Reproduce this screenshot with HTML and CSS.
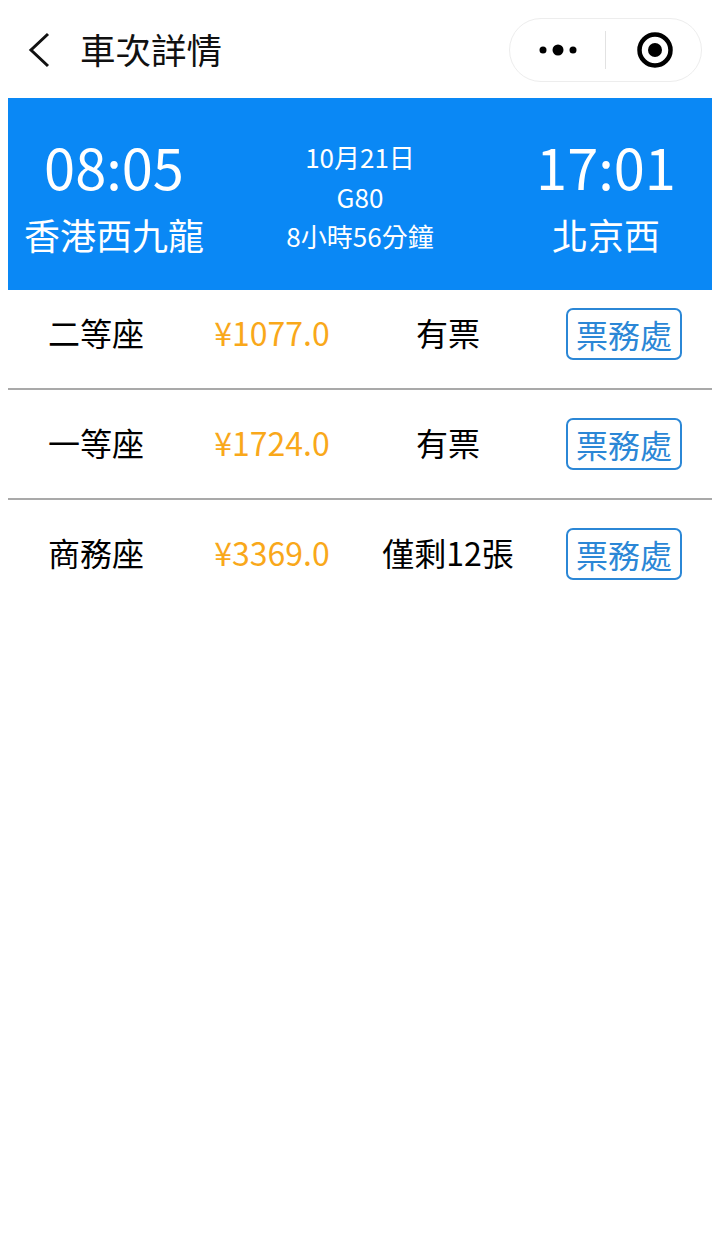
FILE: index.html
```html
<!DOCTYPE html>
<html lang="zh-Hant">
<head>
  <meta charset="UTF-8" />
  <title>車次詳情</title>
  <link rel="stylesheet" href="styles.css">
</head>
<body>

<header class="navbar">
  <div class="nav-left">
    <svg class="back-icon" width="22" height="36" viewBox="0 0 22 36">
      <path d="M20 2 L3 18 L20 34" fill="none" stroke="#111" stroke-width="3" />
    </svg>
    <span class="nav-title">車次詳情</span>
  </div>
  <div class="capsule">
    <svg class="capsule-more" width="40" height="14" viewBox="0 0 40 14">
      <circle cx="5" cy="7" r="3.5" fill="#000" />
      <circle cx="20" cy="7" r="5.5" fill="#000" />
      <circle cx="35" cy="7" r="3.5" fill="#000" />
    </svg>
    <span class="capsule-line"></span>
    <svg class="capsule-target" width="38" height="38" viewBox="0 0 38 38">
      <circle cx="19" cy="19" r="15.5" fill="none" stroke="#000" stroke-width="4.5" />
      <circle cx="19" cy="19" r="7" fill="#000" />
    </svg>
  </div>
</header>

<section class="train">
  <div class="stop">
    <div class="stop-time">08:05</div>
    <div class="stop-name">香港西九龍</div>
  </div>
  <div class="train-info">
    <div>10月21日</div>
    <div>G80</div>
    <div>8小時56分鐘</div>
  </div>
  <div class="stop">
    <div class="stop-time">17:01</div>
    <div class="stop-name">北京西</div>
  </div>
</section>

<section class="seats">
  <div class="seat">
    <div>二等座</div>
    <div class="seat-price">¥1077.0</div>
    <div>有票</div>
    <div><a class="seat-btn">票務處</a></div>
  </div>
  <div class="seat">
    <div>一等座</div>
    <div class="seat-price">¥1724.0</div>
    <div>有票</div>
    <div><a class="seat-btn">票務處</a></div>
  </div>
  <div class="seat">
    <div>商務座</div>
    <div class="seat-price">¥3369.0</div>
    <div>僅剩12張</div>
    <div><a class="seat-btn">票務處</a></div>
  </div>
</section>

</body>
</html>
```

FILE: styles.css
```css
body {
  font-family: "Noto Sans CJK TC", "Noto Sans", sans-serif;
  background: #fff;
  color: #000;
  margin: 0;
  padding: 0;
}
.navbar {
  height: 98px;
  box-sizing: border-box;
  padding: 18px 18px 16px 28px;
  display: flex;
  justify-content: space-between;
  align-items: center;
}
.nav-left {
  display: flex;
  align-items: center;
}
.back-icon {
  margin-right: 30px;
}
.nav-title {
  font-size: 35.5px;
  line-height: 50px;
  padding-bottom: 2px;
  color: #111;
}
.capsule {
  width: 193px;
  height: 64px;
  box-sizing: border-box;
  border: 1px solid #ededed;
  border-radius: 32px;
  display: flex;
  align-items: center;
  padding-left: 28px;
}
.capsule-line {
  width: 1px;
  height: 38px;
  background: #e2e2e2;
  margin-left: 27px;
}
.capsule-target {
  margin-left: 30px;
}
.train {
  margin: 0 8px;
  height: 192px;
  background: #0a88f5;
  color: #fff;
  display: grid;
  grid-template-columns: 212px 1fr 212px;
  align-items: center;
  text-align: center;
}
.stop {
  padding-bottom: 2px;
}
.stop-time {
  font-size: 56px;
  line-height: 82px;
}
.stop-name {
  font-size: 36px;
  line-height: 54px;
}
.train-info {
  font-size: 26px;
  line-height: 39.5px;
  padding-top: 5px;
}
.seats {
  margin: 0 8px;
}
.seat {
  display: grid;
  grid-template-columns: repeat(4, 1fr);
  align-items: start;
  text-align: center;
  padding: 28px 0;
  border-bottom: 2px solid #a9a9a9;
  font-size: 32px;
  line-height: 48px;
}
.seat:first-child {
  padding-top: 18px;
}
.seat:last-child {
  border-bottom: none;
}
.seat-price {
  color: #f9a81a;
}
.seat-btn {
  display: block;
  width: 116px;
  height: 52px;
  box-sizing: border-box;
  margin: 0 auto;
  border: 2px solid #2b87d6;
  border-radius: 7px;
  color: #2b87d6;
  line-height: 48px;
}
```
